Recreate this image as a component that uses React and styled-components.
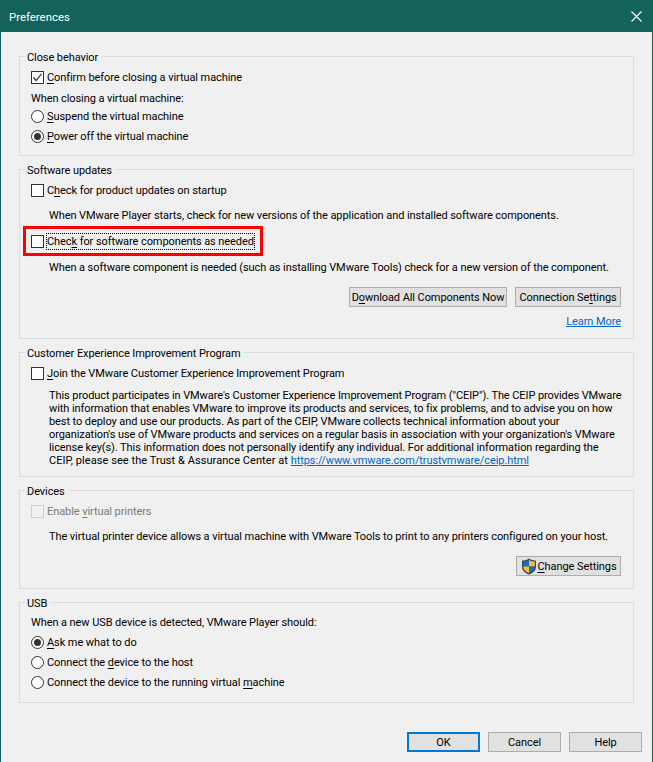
import styled, { createGlobalStyle } from "styled-components";

const GlobalStyle = createGlobalStyle`
    html, body {
        margin: 0;
        padding: 0;
        background: #f0f0f0;
    }
`;

const Window = styled.div`
    box-sizing: border-box;
    width: 653px;
    height: 762px;
    display: flex;
    flex-direction: column;
    border: 1px solid #14625c;
    border-bottom: none;
    background: #f0f0f0;
    color: #000;
    font-family: Roboto, "Noto Sans", sans-serif;
    font-size: 11px;
    letter-spacing: -0.08px;
    line-height: 14px;
    overflow: hidden;
`;

const TitleBar = styled.div`
    flex: none;
    height: 31px;
    display: flex;
    align-items: center;
    justify-content: space-between;
    padding: 0 10px 0 8px;
    background: #14625c;
    color: #fff;
    font-size: 11.4px;
    letter-spacing: 0;
`;

const Body = styled.div`
    flex: 1;
    display: flex;
    flex-direction: column;
    gap: 6px;
    padding: 17px 18px 0;
`;

const Group = styled.fieldset`
    box-sizing: border-box;
    height: ${({$height}) => $height}px;
    margin: 0;
    padding: 4px 11px 0;
    border: 1px solid #dcdcdc;
    min-width: 0;
    white-space: nowrap;
`;

const Legend = styled.legend`
    padding: 0 3px 0 2px;
    margin-left: -6px;
    height: 14px;
    line-height: 18px;
`;

const Row = styled.div`
    height: ${({$height}) => $height ?? 20}px;
    margin-top: ${({$top}) => $top ?? 0}px;
    display: flex;
    align-items: center;
    gap: 3px;
    color: ${({$disabled}) => $disabled ? "#7a7a7a" : "inherit"};
`;

const Label = styled.span`
    padding-top: 2px;
`;

const Box = styled.span`
    box-sizing: border-box;
    flex: none;
    width: 13px;
    height: 13px;
    display: inline-flex;
    align-items: center;
    justify-content: center;
    background: ${({$disabled}) => $disabled ? "#f0f0f0" : "#fff"};
    border: 1px solid ${({$disabled}) => $disabled ? "#cfcfcf" : "#333"};
`;

const Radio = styled.span`
    box-sizing: border-box;
    flex: none;
    width: 13px;
    height: 13px;
    display: inline-flex;
    align-items: center;
    justify-content: center;
    background: #fff;
    border: 1px solid #333;
    border-radius: 50%;

    &::after {
        content: "";
        display: ${({$checked}) => $checked ? "block" : "none"};
        width: 7px;
        height: 7px;
        border-radius: 50%;
        background: #333;
    }
`;

const Key = styled.span`
    text-decoration: underline;
    text-underline-offset: 2px;
    text-decoration-thickness: 1px;
`;

const Focused = styled.span`
    outline: 1px dotted #000;
    padding: 1px 0 0;
`;

const Highlight = styled.div`
    box-sizing: border-box;
    width: 240px;
    height: 30px;
    margin: 1px 0 0 -8px;
    padding-left: 5px;
    display: flex;
    align-items: center;
    gap: 3px;
    border: 3px solid #f00;
`;

const Note = styled.p`
    box-sizing: border-box;
    margin: ${({$top}) => $top ?? 5}px 0 0;
    padding: 2px 0 0 18px;
    height: 20px;
    display: flex;
    align-items: center;
`;

const Para = styled.p`
    margin: 6px 0 0;
    padding-left: 18px;
    line-height: 13px;
`;

const ParaLine = styled.span`
    display: block;
    height: 13px;
`;

const LinkLead = styled.span`
    letter-spacing: 0.06px;
`;

const Actions = styled.div`
    display: flex;
    justify-content: flex-end;
    gap: 8px;
    padding-right: 1px;
    margin-top: 10px;
`;

const Button = styled.button`
    box-sizing: border-box;
    height: 20px;
    width: ${({$width}) => $width}px;
    padding: 1px 0 0;
    display: inline-flex;
    align-items: center;
    justify-content: center;
    background: #e1e1e1;
    border: ${({$primary}) => $primary ? "2px solid #0078d7" : "1px solid #adadad"};
    border-radius: 0;
    color: #000;
    font: inherit;
    letter-spacing: inherit;
`;

const LinkRow = styled.div`
    display: flex;
    justify-content: flex-end;
    padding-right: 1px;
    margin-top: 8px;
`;

const Anchor = styled.a`
    color: #0066cc;
    text-decoration: underline;
`;

const Footer = styled.div`
    flex: none;
    display: flex;
    justify-content: flex-end;
    gap: 8px;
    padding: 0 10px 10px 0;
`;

const CheckMark = () => (
    <svg width="11" height="11" viewBox="0 0 11 11" fill="none">
        <path d="M1.5 5.5 L4.2 8.5 L9.5 1.8" stroke="#333" strokeWidth="1.2" />
    </svg>
);

const CloseIcon = () => (
    <svg width="11" height="11" viewBox="0 0 11 11" fill="none">
        <path d="M0.5 0.5 L10.5 10.5 M10.5 0.5 L0.5 10.5" stroke="#fff" strokeWidth="1.1" />
    </svg>
);

const ShieldIcon = () => (
    <svg width="16" height="17" viewBox="0 0 16 17" style={{marginRight: 1, marginTop: -1}}>
        <path d="M8 0.5 C10 2 12.5 2.5 15 2.5 L15 9 C15 12.5 12 15 8 16.5 C4 15 1 12.5 1 9 L1 2.5 C3.5 2.5 6 2 8 0.5 Z" fill="#3c4a5a" />
        <path d="M8 2 L8 8.5 L2.2 8.5 L2.2 3.6 C4.2 3.5 6.3 3 8 2 Z" fill="#1a6fc4" />
        <path d="M8 2 C9.7 3 11.8 3.5 13.8 3.6 L13.8 8.5 L8 8.5 Z" fill="#f6c02c" />
        <path d="M2.2 8.5 L8 8.5 L8 15 C5 13.8 2.4 12 2.2 8.5 Z" fill="#f6c02c" />
        <path d="M8 8.5 L13.8 8.5 C13.6 12 11 13.8 8 15 Z" fill="#1a6fc4" />
    </svg>
);

const ceipLines = [
    "This product participates in VMware's Customer Experience Improvement Program (\"CEIP\"). The CEIP provides VMware",
    "with information that enables VMware to improve its products and services, to fix problems, and to advise you on how",
    "best to deploy and use our products. As part of the CEIP, VMware collects technical information about your",
    "organization's use of VMware products and services on a regular basis in association with your organization's VMware",
    "license key(s). This information does not personally identify any individual. For additional information regarding the",
];

export default function App() {
    return (
        <Window>
            <GlobalStyle />
            <TitleBar>
                <span>Preferences</span>
                <CloseIcon />
            </TitleBar>
            <Body>
                <Group $height={107}>
                    <Legend>Close behavior</Legend>
                    <Row><Box><CheckMark /></Box><Label><Key>C</Key>onfirm before closing a virtual machine</Label></Row>
                    <Row $height={18} $top={2}><Label>When closing a virtual machine:</Label></Row>
                    <Row $height={18}><Radio /><Label><Key>S</Key>uspend the virtual machine</Label></Row>
                    <Row $top={1}><Radio $checked /><Label><Key>P</Key>ower off the virtual machine</Label></Row>
                </Group>
                <Group $height={177}>
                    <Legend>Software updates</Legend>
                    <Row><Box /><Label>C<Key>h</Key>eck for product updates on startup</Label></Row>
                    <Note>When VMware Player starts, check for new versions of the application and installed software components.</Note>
                    <Highlight><Box /><Focused>Chec<Key>k</Key> for software components as needed</Focused></Highlight>
                    <Note $top={1}>When a software component is needed (such as installing VMware Tools) check for a new version of the component.</Note>
                    <Actions>
                        <Button $width={158}><span>D<Key>o</Key>wnload All Components Now</span></Button>
                        <Button $width={106}><span>Connection Se<Key>t</Key>tings</span></Button>
                    </Actions>
                    <LinkRow><Anchor href="#">Learn More</Anchor></LinkRow>
                </Group>
                <Group $height={132}>
                    <Legend>Customer Experience Improvement Program</Legend>
                    <Row><Box /><Label><Key>J</Key>oin the VMware Customer Experience Improvement Program</Label></Row>
                    <Para>
                        {ceipLines.map((line) => <ParaLine key={line}>{line}</ParaLine>)}
                        <ParaLine><LinkLead>CEIP, please see the Trust &amp; Assurance Center at </LinkLead><Anchor href="#">https://www.vmware.com/trustvmware/ceip.html</Anchor></ParaLine>
                    </Para>
                </Group>
                <Group $height={106}>
                    <Legend>Devices</Legend>
                    <Row $disabled><Box $disabled /><Label>Enable <Key>v</Key>irtual printers</Label></Row>
                    <Note>The virtual printer device allows a virtual machine with VMware Tools to print to any printers configured on your host.</Note>
                    <Actions>
                        <Button $width={105}><ShieldIcon /><span><Key>C</Key>hange Settings</span></Button>
                    </Actions>
                </Group>
                <Group $height={108}>
                    <Legend>USB</Legend>
                    <Row $height={18}><Label>When a new USB device is detected, VMware Player should:</Label></Row>
                    <Row $top={1}><Radio $checked /><Label><Key>A</Key>sk me what to do</Label></Row>
                    <Row><Radio /><Label>Connect the <Key>d</Key>evice to the host</Label></Row>
                    <Row><Radio /><Label>Connect the device to the running virtual <Key>m</Key>achine</Label></Row>
                </Group>
            </Body>
            <Footer>
                <Button $primary $width={73}>OK</Button>
                <Button $width={73}>Cancel</Button>
                <Button $width={73}>Help</Button>
            </Footer>
        </Window>
    );
}
